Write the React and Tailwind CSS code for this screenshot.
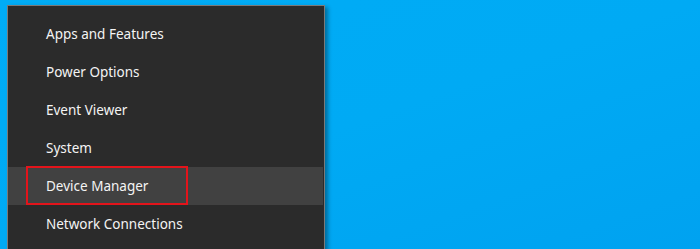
import React from "react";

const items = [
    "Apps and Features",
    "Power Options",
    "Event Viewer",
    "System",
    "Device Manager",
    "Network Connections",
];

export default function App() {
    return (
        <div className="h-[249px] w-[700px] overflow-hidden bg-gradient-to-br from-[#00acf6] via-[#00aaf4] to-[#00a2f0] pl-[7px] pt-[5px]" style={{ fontFamily: '"Noto Sans", "Liberation Sans", sans-serif' }}>
            <div className="relative h-[260px] w-[318px] border border-[#7a7a7a] bg-[#2b2b2b] pt-[9px] shadow-[3px_2px_4px_rgba(0,0,0,0.35)]">
                {items.map((label) => (
                    <div
                        key={label}
                        className={`mr-[1px] flex h-[38px] items-center pl-[38px] text-[13.5px] text-[#f4f4f4] ${label === "Device Manager" ? "bg-[#414141]" : ""}`}
                    >
                        {label}
                    </div>
                ))}

                {/* highlight annotation */}
                <div className="absolute left-[18px] top-[160px] h-[39px] w-[162px] border-2 border-[#e3141b]"></div>
            </div>
        </div>
    );
}
